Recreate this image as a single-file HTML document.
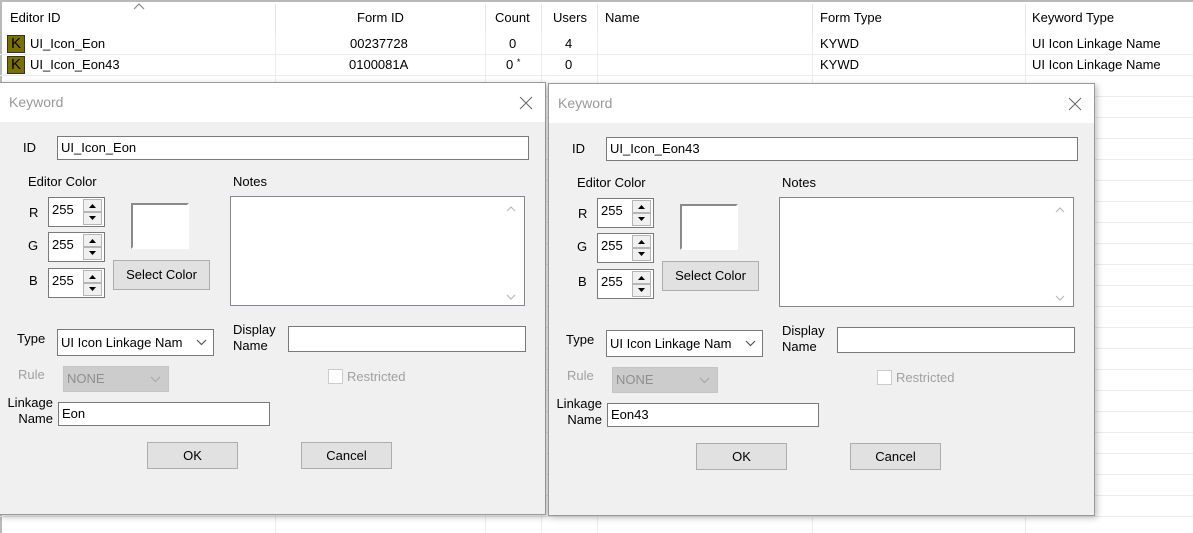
<!DOCTYPE html>
<html><head><meta charset="utf-8"><style>
*{box-sizing:border-box;margin:0;padding:0}
body{width:1193px;height:533px;overflow:hidden;background:#fff;font-family:"Liberation Sans",sans-serif;font-size:13px;color:#000;position:relative}
.a{position:absolute;white-space:nowrap}
.hl{position:absolute;left:0;width:1193px;height:1px;background:#ececec}
.vl{position:absolute;top:34px;width:1px;height:499px;background:#ececec}
.hs{position:absolute;top:4px;width:1px;height:30px;background:#e5e5e5}
.ic{position:absolute;left:7px;width:18px;height:18px;background:#7a7000;border:1px solid #333;font-size:15px;line-height:16px;text-align:center;color:#000}
.d{position:absolute;width:547px;height:433px;background:#f0f0f0;border:1px solid #9a9a9a;box-shadow:2px 2px 6px rgba(0,0,0,.25)}
.tb{position:absolute;left:0;top:0;width:100%;height:39px;background:#fff}
.tt{position:absolute;left:9px;top:11px;font-size:14px;color:#999}
.in{position:absolute;background:#fff;border:1px solid #7a7a7a;padding-left:3px;line-height:21px}
.btn{position:absolute;background:#e1e1e1;border:1px solid #adadad;text-align:center}
.gray{color:#a0a0a0}
</style></head><body>
<div style="position:absolute;left:0;top:0;width:1193px;height:2px;background:#b9b9b9"></div>
<div style="position:absolute;left:0;top:0;width:2px;height:533px;background:#b9b9b9"></div>
<div class="hs" style="left:275px"></div><div class="hs" style="left:485px"></div><div class="hs" style="left:541px"></div><div class="hs" style="left:597px"></div><div class="hs" style="left:812px"></div><div class="hs" style="left:1025px"></div>
<div class="vl" style="left:275px"></div><div class="vl" style="left:485px"></div><div class="vl" style="left:541px"></div><div class="vl" style="left:597px"></div><div class="vl" style="left:812px"></div><div class="vl" style="left:1025px"></div>
<div class="hl" style="top:54px"></div><div class="hl" style="top:75px"></div><div class="hl" style="top:96px"></div><div class="hl" style="top:117px"></div><div class="hl" style="top:138px"></div><div class="hl" style="top:159px"></div><div class="hl" style="top:180px"></div><div class="hl" style="top:201px"></div><div class="hl" style="top:222px"></div><div class="hl" style="top:243px"></div><div class="hl" style="top:264px"></div><div class="hl" style="top:285px"></div><div class="hl" style="top:306px"></div><div class="hl" style="top:327px"></div><div class="hl" style="top:348px"></div><div class="hl" style="top:369px"></div><div class="hl" style="top:390px"></div><div class="hl" style="top:411px"></div><div class="hl" style="top:432px"></div><div class="hl" style="top:453px"></div><div class="hl" style="top:474px"></div><div class="hl" style="top:495px"></div><div class="hl" style="top:516px"></div>
<svg class="a" style="left:133px;top:3px" width="12" height="7"><path d="M1 6 L6 1 L11 6" fill="none" stroke="#888" stroke-width="1.2"/></svg>
<div class="a" style="left:10px;top:10px">Editor ID</div>
<div class="a" style="left:357px;top:10px">Form ID</div>
<div class="a" style="left:495px;top:10px">Count</div>
<div class="a" style="left:553px;top:10px">Users</div>
<div class="a" style="left:605px;top:10px">Name</div>
<div class="a" style="left:820px;top:10px">Form Type</div>
<div class="a" style="left:1032px;top:10px">Keyword Type</div>
<div class="ic" style="top:35px">K</div><div class="a" style="left:30px;top:36px">UI_Icon_Eon</div>
<div class="a" style="left:350px;top:36px">00237728</div><div class="a" style="left:509px;top:36px">0</div><div class="a" style="left:565px;top:36px">4</div><div class="a" style="left:820px;top:36px">KYWD</div><div class="a" style="left:1032px;top:36px">UI Icon Linkage Name</div>
<div class="ic" style="top:56px">K</div><div class="a" style="left:30px;top:57px">UI_Icon_Eon43</div>
<div class="a" style="left:349px;top:57px">0100081A</div><div class="a" style="left:506px;top:57px">0 <span style="font-size:9px;vertical-align:top">*</span></div><div class="a" style="left:565px;top:57px">0</div><div class="a" style="left:820px;top:57px">KYWD</div><div class="a" style="left:1032px;top:57px">UI Icon Linkage Name</div>

<!-- dialog 1 -->
<div class="d" style="left:-1px;top:82px">
<div class="tb"></div><div class="tt">Keyword</div>
<svg class="a" style="left:519px;top:13px" width="14" height="14"><path d="M1 1L13 13M13 1L1 13" stroke="#666" stroke-width="1"/></svg>
<div class="a" style="left:23px;top:57px">ID</div>
<div class="in" style="left:57px;top:53px;width:472px;height:24px">UI_Icon_Eon</div>
<div class="a" style="left:28px;top:91px">Editor Color</div>
<div class="a" style="left:233px;top:91px">Notes</div>
<div class="a" style="left:29px;top:122px">R</div><div class="in" style="left:48px;top:114px;width:57px;height:30px;line-height:24px">255</div>
<svg class="a" style="left:83px;top:116px" width="20" height="26"><rect x="0.5" y="0.5" width="18" height="12" fill="#f0f0f0" stroke="#b5b5b5"/><rect x="0.5" y="13.5" width="18" height="12" fill="#f0f0f0" stroke="#b5b5b5"/><path d="M6 9L9.5 5L13 9Z M6 17L9.5 21L13 17Z" fill="#000"/></svg>
<div class="a" style="left:28px;top:155px">G</div><div class="in" style="left:48px;top:149px;width:57px;height:30px;line-height:24px">255</div>
<svg class="a" style="left:83px;top:151px" width="20" height="26"><rect x="0.5" y="0.5" width="18" height="12" fill="#f0f0f0" stroke="#b5b5b5"/><rect x="0.5" y="13.5" width="18" height="12" fill="#f0f0f0" stroke="#b5b5b5"/><path d="M6 9L9.5 5L13 9Z M6 17L9.5 21L13 17Z" fill="#000"/></svg>
<div class="a" style="left:29px;top:190px">B</div><div class="in" style="left:48px;top:185px;width:57px;height:30px;line-height:24px">255</div>
<svg class="a" style="left:83px;top:187px" width="20" height="26"><rect x="0.5" y="0.5" width="18" height="12" fill="#f0f0f0" stroke="#b5b5b5"/><rect x="0.5" y="13.5" width="18" height="12" fill="#f0f0f0" stroke="#b5b5b5"/><path d="M6 9L9.5 5L13 9Z M6 17L9.5 21L13 17Z" fill="#000"/></svg>
<div class="a" style="left:131px;top:120px;width:58px;height:46px;background:#fff;border:2px solid #8a8a8a;border-right-color:#fff;border-bottom-color:#fff"></div>
<div class="btn" style="left:113px;top:177px;width:97px;height:30px;line-height:27px">Select Color</div>
<div class="in" style="left:230px;top:113px;width:295px;height:110px;border-color:#828790"></div>
<svg class="a" style="left:505px;top:120px" width="12" height="100"><path d="M2 8L6 4L10 8 M2 92L6 96L10 92" fill="none" stroke="#bbb" stroke-width="1.2"/></svg>
<div class="a" style="left:17px;top:248px">Type</div>
<div class="in" style="left:57px;top:246px;width:157px;height:27px;line-height:25px;overflow:hidden">UI Icon Linkage Nam</div>
<svg class="a" style="left:196px;top:256px" width="11" height="7"><path d="M1 1L5.5 5.5L10 1" fill="none" stroke="#555" stroke-width="1.2"/></svg>
<div class="a" style="left:233px;top:239px;line-height:16px">Display<br>Name</div>
<div class="in" style="left:288px;top:243px;width:238px;height:26px"></div>
<div class="a gray" style="left:18px;top:284px">Rule</div>
<div class="a" style="left:63px;top:283px;width:106px;height:26px;background:#ccc;border:1px solid #c4c4c4;color:#8f8f8f;padding-left:3px;line-height:24px">NONE</div>
<svg class="a" style="left:150px;top:293px" width="11" height="7"><path d="M1 1L5.5 5.5L10 1" fill="none" stroke="#a8a8a8" stroke-width="1.2"/></svg>
<div class="a" style="left:328px;top:286px;width:15px;height:15px;background:#fff;border:1px solid #ccc"></div>
<div class="a gray" style="left:347px;top:286px">Restricted</div>
<div class="a" style="left:5px;top:312px;line-height:16px;text-align:right;width:48px">Linkage<br>Name</div>
<div class="in" style="left:58px;top:319px;width:212px;height:24px">Eon</div>
<div class="btn" style="left:147px;top:359px;width:91px;height:27px;line-height:25px">OK</div>
<div class="btn" style="left:301px;top:359px;width:91px;height:27px;line-height:25px">Cancel</div>
</div>

<!-- dialog 2 -->
<div class="d" style="left:548px;top:83px">
<div class="tb"></div><div class="tt">Keyword</div>
<svg class="a" style="left:519px;top:13px" width="14" height="14"><path d="M1 1L13 13M13 1L1 13" stroke="#666" stroke-width="1"/></svg>
<div class="a" style="left:23px;top:57px">ID</div>
<div class="in" style="left:57px;top:53px;width:472px;height:24px">UI_Icon_Eon43</div>
<div class="a" style="left:28px;top:91px">Editor Color</div>
<div class="a" style="left:233px;top:91px">Notes</div>
<div class="a" style="left:29px;top:122px">R</div><div class="in" style="left:48px;top:114px;width:57px;height:30px;line-height:24px">255</div>
<svg class="a" style="left:83px;top:116px" width="20" height="26"><rect x="0.5" y="0.5" width="18" height="12" fill="#f0f0f0" stroke="#b5b5b5"/><rect x="0.5" y="13.5" width="18" height="12" fill="#f0f0f0" stroke="#b5b5b5"/><path d="M6 9L9.5 5L13 9Z M6 17L9.5 21L13 17Z" fill="#000"/></svg>
<div class="a" style="left:28px;top:155px">G</div><div class="in" style="left:48px;top:149px;width:57px;height:30px;line-height:24px">255</div>
<svg class="a" style="left:83px;top:151px" width="20" height="26"><rect x="0.5" y="0.5" width="18" height="12" fill="#f0f0f0" stroke="#b5b5b5"/><rect x="0.5" y="13.5" width="18" height="12" fill="#f0f0f0" stroke="#b5b5b5"/><path d="M6 9L9.5 5L13 9Z M6 17L9.5 21L13 17Z" fill="#000"/></svg>
<div class="a" style="left:29px;top:190px">B</div><div class="in" style="left:48px;top:185px;width:57px;height:30px;line-height:24px">255</div>
<svg class="a" style="left:83px;top:187px" width="20" height="26"><rect x="0.5" y="0.5" width="18" height="12" fill="#f0f0f0" stroke="#b5b5b5"/><rect x="0.5" y="13.5" width="18" height="12" fill="#f0f0f0" stroke="#b5b5b5"/><path d="M6 9L9.5 5L13 9Z M6 17L9.5 21L13 17Z" fill="#000"/></svg>
<div class="a" style="left:131px;top:120px;width:58px;height:46px;background:#fff;border:2px solid #8a8a8a;border-right-color:#fff;border-bottom-color:#fff"></div>
<div class="btn" style="left:113px;top:177px;width:97px;height:30px;line-height:27px">Select Color</div>
<div class="in" style="left:230px;top:113px;width:295px;height:110px;border-color:#828790"></div>
<svg class="a" style="left:505px;top:120px" width="12" height="100"><path d="M2 8L6 4L10 8 M2 92L6 96L10 92" fill="none" stroke="#bbb" stroke-width="1.2"/></svg>
<div class="a" style="left:17px;top:248px">Type</div>
<div class="in" style="left:57px;top:246px;width:157px;height:27px;line-height:25px;overflow:hidden">UI Icon Linkage Nam</div>
<svg class="a" style="left:196px;top:256px" width="11" height="7"><path d="M1 1L5.5 5.5L10 1" fill="none" stroke="#555" stroke-width="1.2"/></svg>
<div class="a" style="left:233px;top:239px;line-height:16px">Display<br>Name</div>
<div class="in" style="left:288px;top:243px;width:238px;height:26px"></div>
<div class="a gray" style="left:18px;top:284px">Rule</div>
<div class="a" style="left:63px;top:283px;width:106px;height:26px;background:#ccc;border:1px solid #c4c4c4;color:#8f8f8f;padding-left:3px;line-height:24px">NONE</div>
<svg class="a" style="left:150px;top:293px" width="11" height="7"><path d="M1 1L5.5 5.5L10 1" fill="none" stroke="#a8a8a8" stroke-width="1.2"/></svg>
<div class="a" style="left:328px;top:286px;width:15px;height:15px;background:#fff;border:1px solid #ccc"></div>
<div class="a gray" style="left:347px;top:286px">Restricted</div>
<div class="a" style="left:5px;top:312px;line-height:16px;text-align:right;width:48px">Linkage<br>Name</div>
<div class="in" style="left:58px;top:319px;width:212px;height:24px">Eon43</div>
<div class="btn" style="left:147px;top:359px;width:91px;height:27px;line-height:25px">OK</div>
<div class="btn" style="left:301px;top:359px;width:91px;height:27px;line-height:25px">Cancel</div>
</div>
</body></html>
